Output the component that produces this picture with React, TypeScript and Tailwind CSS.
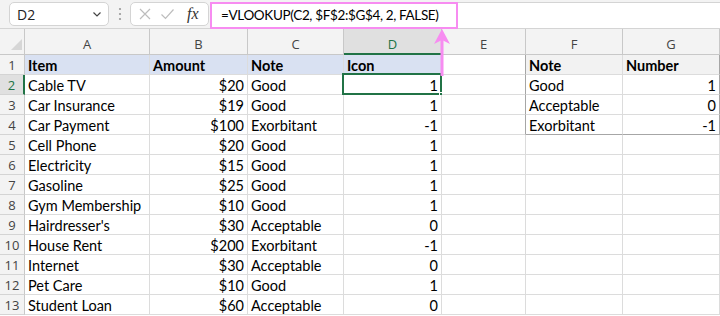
import React from "react";

const rows: string[][] = [
  ["Item", "Amount", "Note", "Icon", "", "Note", "Number"],
  ["Cable TV", "$20", "Good", "1", "", "Good", "1"],
  ["Car Insurance", "$19", "Good", "1", "", "Acceptable", "0"],
  ["Car Payment", "$100", "Exorbitant", "-1", "", "Exorbitant", "-1"],
  ["Cell Phone", "$20", "Good", "1", "", "", ""],
  ["Electricity", "$15", "Good", "1", "", "", ""],
  ["Gasoline", "$25", "Good", "1", "", "", ""],
  ["Gym Membership", "$10", "Good", "1", "", "", ""],
  ["Hairdresser's", "$30", "Acceptable", "0", "", "", ""],
  ["House Rent", "$200", "Exorbitant", "-1", "", "", ""],
  ["Internet", "$30", "Acceptable", "0", "", "", ""],
  ["Pet Care", "$10", "Good", "1", "", "", ""],
  ["Student Loan", "$60", "Acceptable", "0", "", "", ""],
];

const cols = ["A", "B", "C", "D", "E", "F", "G"];

function Cell({ r, c, v }: { r: number; c: number; v: string }) {
  const right = r > 0 && (c === 1 || c === 3 || c === 6);
  const bold = r === 0;
  let bg = "bg-white";
  if (r === 0 && c <= 3) bg = "bg-[#d9e1f2]";
  if (r === 0 && (c === 5 || c === 6)) bg = "bg-[#f2f2f2]";
  let border = "border-r border-b border-[#dcdcdc]";
  if (r <= 3 && c === 4) border = "border-r border-b border-r-[#a6a6a6] border-b-[#dcdcdc]";
  if (r <= 3 && c === 6) border = "border-r border-b border-r-[#a6a6a6] border-b-[#dcdcdc]";
  if (r === 3 && c === 5) border = "border-r border-b border-r-[#dcdcdc] border-b-[#a6a6a6]";
  if (r === 3 && c === 6) border = "border-r border-b border-r-[#a6a6a6] border-b-[#a6a6a6]";
  const selected = r === 1 && c === 3;
  return (
    <div
      className={`relative h-[20px] flex items-end px-[3px] overflow-visible whitespace-nowrap text-[14.5px] leading-[16px] text-black ${bg} ${border} ${
        right ? "justify-end" : "justify-start"
      } ${bold ? "font-bold" : ""}`}
    >
      {v}
      {selected && (
        <>
          <div className="absolute left-[-2px] top-[-2px] right-[-1px] bottom-[-1px] border-2 border-[#217346] pointer-events-none" />
          <div className="absolute right-[-4px] bottom-[-4px] w-[6px] h-[6px] bg-[#217346] border border-white" />
        </>
      )}
    </div>
  );
}

export default function App() {
  return (
    <div
      className="relative w-[720px] h-[316px] overflow-hidden bg-white"
      style={{ fontFamily: "Lato, 'Open Sans', sans-serif" }}
    >
      {/* top formula bar */}
      <div className="h-[29px] bg-[#f3f3f3] flex items-center border-b border-[#d4d4d4]">
        <div className="ml-[9px] w-[100px] h-[24px] bg-white border border-[#d4d4d4] rounded-[5px] flex items-center justify-between pl-[7px] pr-[5px]">
          <span className="text-[14px] text-[#222]" style={{ fontFamily: "'Open Sans', sans-serif" }}>D2</span>
          <svg width="12" height="12" viewBox="0 0 12 12">
            <path d="M2.5 4.5 L6 8 L9.5 4.5" fill="none" stroke="#444" strokeWidth="1.2" />
          </svg>
        </div>
        <div className="w-[21px] flex justify-center">
          <svg width="4" height="14" viewBox="0 0 4 14">
            <circle cx="2" cy="2" r="1.1" fill="#999" />
            <circle cx="2" cy="7" r="1.1" fill="#999" />
            <circle cx="2" cy="12" r="1.1" fill="#999" />
          </svg>
        </div>
        <div className="w-[79px] h-[24px] bg-white border border-[#d4d4d4] rounded-[5px] flex items-center pl-[7px] gap-[8px]">
          <svg width="14" height="14" viewBox="0 0 14 14">
            <path d="M2 2 L12 12 M12 2 L2 12" stroke="#bdbdbd" strokeWidth="1.2" fill="none" />
          </svg>
          <svg width="15" height="14" viewBox="0 0 15 14">
            <path d="M1.5 7.5 L5.5 11.5 L13.5 2.5" stroke="#bdbdbd" strokeWidth="1.2" fill="none" />
          </svg>
          <span
            className="text-[16px] italic text-[#333] leading-none ml-[4px]"
            style={{ fontFamily: "'Liberation Serif', serif" }}
          >
            fx
          </span>
        </div>
        <div className="flex-1 self-stretch mt-[2px] ml-[1px] bg-white border-t border-[#d4d4d4] flex">
          <div className="w-[248px] h-[27px] -mt-[1px] border-2 border-[#f78cf1] flex items-center pl-[9px] text-[13.5px] tracking-[-0.35px] text-black whitespace-nowrap">
            =VLOOKUP(C2, $F$2:$G$4, 2, FALSE)
          </div>
        </div>
      </div>

      {/* sheet grid */}
      <div className="grid grid-cols-[25px_125px_98px_96px_98px_84px_97px_97px]">
        <div className="relative h-[26px] bg-[#f3f3f3] border-r border-b border-[#c8c8c8]">
          <svg className="absolute left-[11px] top-[10px]" width="11" height="11" viewBox="0 0 11 11">
            <path d="M11 0 L11 11 L0 11 Z" fill="#d6d6d6" />
          </svg>
        </div>
        {cols.map((c) => (
          <div
            key={c}
            className={`h-[26px] flex items-center justify-center pt-[7px] text-[13px] border-r ${
              c === "D"
                ? "bg-[#e0e0e0] text-[#217346] border-b-2 border-b-[#217346] border-r-[#c8c8c8]"
                : "bg-[#f3f3f3] text-[#444] border-b border-[#c8c8c8]"
            }`}
            style={{ fontFamily: "'Open Sans', sans-serif" }}
          >
            {c}
          </div>
        ))}
        {rows.map((row, r) => (
          <React.Fragment key={r}>
            <div
              className={`h-[20px] flex items-center justify-center pt-[2px] text-[13px] border-b border-[#d4d4d4] ${
                r === 1
                  ? "bg-[#e0e0e0] text-[#217346] border-r-2 border-r-[#217346]"
                  : "bg-[#f3f3f3] text-[#444] border-r border-r-[#c8c8c8]"
              }`}
              style={{ fontFamily: "'Open Sans', sans-serif" }}
            >
              {r + 1}
            </div>
            {row.map((v, c) => (
              <Cell key={c} r={r} c={c} v={v} />
            ))}
          </React.Fragment>
        ))}
      </div>

      {/* pink arrow */}
      <svg className="absolute left-[432px] top-[28px]" width="20" height="48" viewBox="0 0 20 48">
        <path d="M10 1 L18 16 L10 12 L2 16 Z" fill="#f78cf1" />
        <rect x="8.5" y="10" width="3" height="38" fill="#f78cf1" />
      </svg>
    </div>
  );
}
